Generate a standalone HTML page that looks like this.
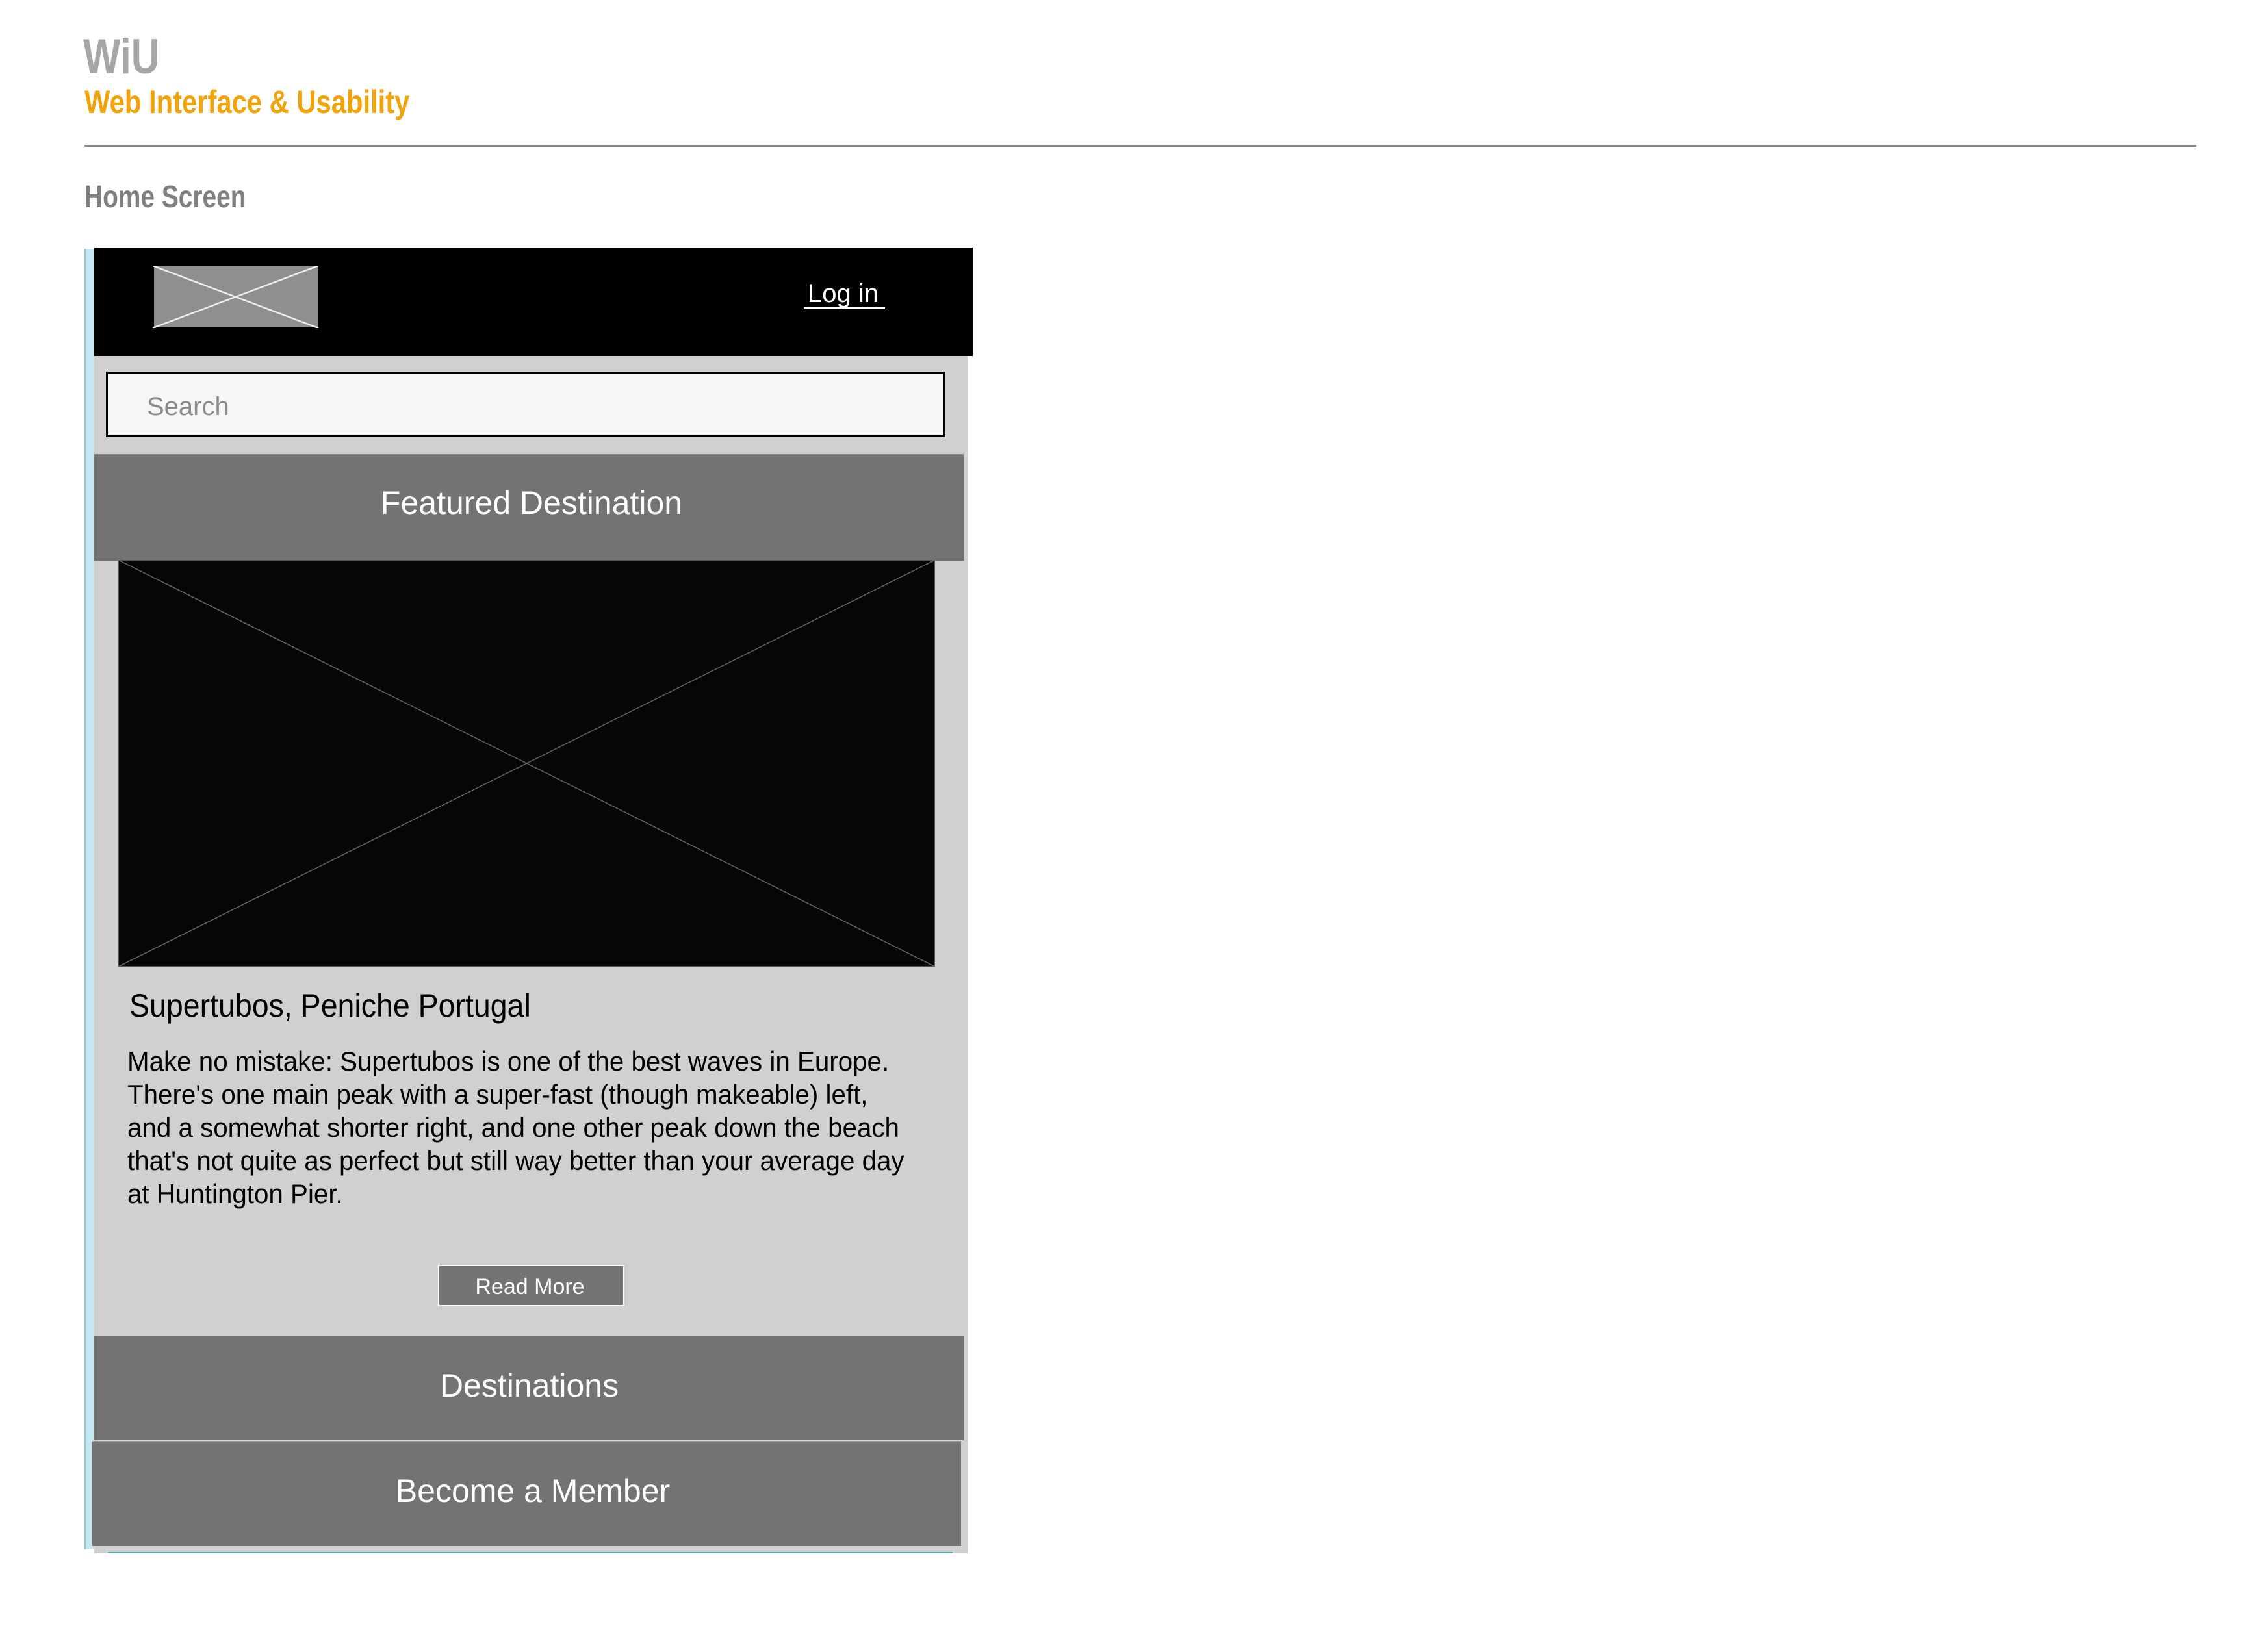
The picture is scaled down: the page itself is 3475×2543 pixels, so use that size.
<!DOCTYPE html>
<html><head><meta charset="utf-8"><style>
body{margin:0;width:3475px;height:2543px;background:#fff;position:relative;overflow:hidden;font-family:"Liberation Sans",sans-serif}
.a{position:absolute;white-space:nowrap}
.c{transform-origin:left top}
</style></head><body>
<div class="a c" style="left:128px;top:44px;font-size:76px;font-weight:bold;color:#a6a6a6;transform:scaleX(0.8)">WiU</div>
<div class="a c" style="left:130px;top:128px;font-size:50px;font-weight:bold;color:#f0a30a;transform:scaleX(0.835)">Web Interface &amp; Usability</div>
<div class="a" style="left:130px;top:223px;width:3250px;height:3px;background:#888"></div>
<div class="a c" style="left:130px;top:276px;font-size:48px;font-weight:bold;color:#808080;transform:scaleX(0.81)">Home Screen</div>

<div class="a" style="left:130px;top:383px;width:15px;height:2002px;background:#c6e8f2;border-left:2px solid #9cc"></div>
<div class="a" style="left:145px;top:548px;width:1344px;height:1843px;background:#d0d0d0"></div>
<div class="a" style="left:166px;top:2389px;width:1300px;height:2px;background:#5ab"></div>
<div class="a" style="left:145px;top:381px;width:1352px;height:167px;background:#000"></div>
<svg class="a" style="left:235px;top:409px" width="257" height="96"><rect x="2" y="1" width="253" height="94" fill="#8f8f8f"/><line x1="0" y1="0" x2="255" y2="96" stroke="#eee" stroke-width="2.5"/><line x1="0" y1="96" x2="255" y2="0" stroke="#eee" stroke-width="2.5"/></svg>
<div class="a" style="left:1243px;top:430px;font-size:40px;color:#fff">Log in</div>
<div class="a" style="left:1238px;top:473px;width:124px;height:3px;background:#fff"></div>

<div class="a" style="left:163px;top:572px;width:1285px;height:95px;background:#f7f5f6;border:3px solid #000"></div>
<div class="a" style="left:226px;top:604px;font-size:40px;color:#8a8a8a">Search</div>

<div class="a" style="left:145px;top:699px;width:1338px;height:162px;background:#737373;border-top:2px solid #888"></div>
<div class="a" style="left:149px;top:745px;width:1338px;text-align:center;font-size:50px;color:#fff">Featured Destination</div>

<svg class="a" style="left:182px;top:862px" width="1257" height="626"><rect width="1257" height="626" fill="#060606" stroke="#555" stroke-width="2"/><line x1="0" y1="0" x2="1257" y2="626" stroke="#666" stroke-width="1.5"/><line x1="0" y1="626" x2="1257" y2="0" stroke="#666" stroke-width="1.5"/></svg>

<div class="a c" style="left:199px;top:1519px;font-size:50px;color:#000;transform:scaleX(0.93)">Supertubos, Peniche Portugal</div>
<div class="a c" style="left:196px;top:1608px;font-size:42px;line-height:51px;color:#000;transform:scaleX(0.96)">Make no mistake: Supertubos is one of the best waves in Europe.<br>There's one main peak with a super-fast (though makeable) left,<br>and a somewhat shorter right, and one other peak down the beach<br>that's not quite as perfect but still way better than your average day<br>at Huntington Pier.</div>

<div class="a" style="left:674px;top:1947px;width:283px;height:60px;background:#737373;border:2px solid #fff"></div>
<div class="a" style="left:672px;top:1962px;width:287px;text-align:center;font-size:34px;color:#fff">Read More</div>

<div class="a" style="left:145px;top:2056px;width:1339px;height:161px;background:#737373"></div>
<div class="a" style="left:145px;top:2104px;width:1339px;text-align:center;font-size:50px;color:#fff">Destinations</div>
<div class="a" style="left:141px;top:2218px;width:1338px;height:160px;background:#737373;border-top:2px solid #999"></div>
<div class="a" style="left:151px;top:2266px;width:1338px;text-align:center;font-size:50px;color:#fff">Become a Member</div>
</body></html>
